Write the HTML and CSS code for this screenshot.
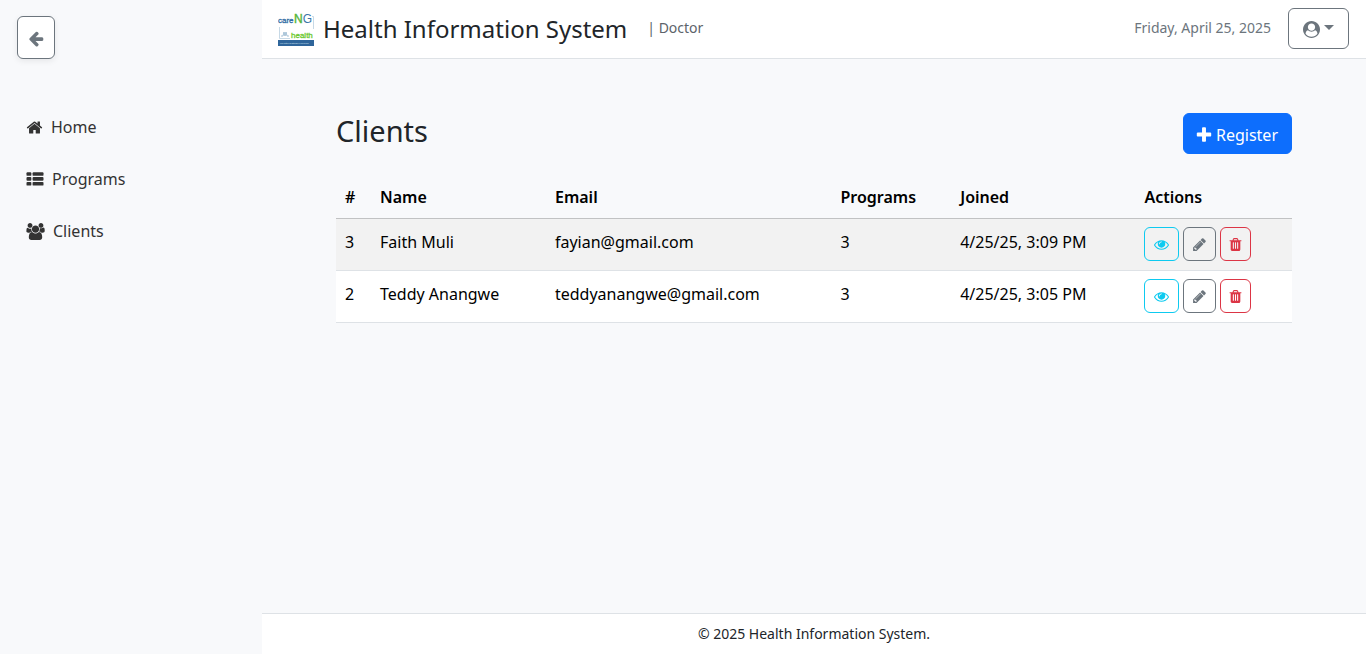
FILE: index.html
```html
<!DOCTYPE html>
<html lang="en">
<head>
<meta charset="utf-8">
<title>Health Information System</title>
<link rel="stylesheet" href="styles.css">
</head>
<body>
<svg class="defs" aria-hidden="true">
  <symbol id="eye" viewBox="0 0 1792 1792"><path d="M1664 960q-152-236-381-353 61 104 61 225 0 185-131.5 316.5t-316.5 131.5-316.5-131.5-131.5-316.5q0-121 61-225-229 117-381 353 133 205 333.5 326.5t434.5 121.5 434.5-121.5 333.5-326.5zm-720-384q0-20-14-34t-34-14q-125 0-214.5 89.5t-89.5 214.5q0 20 14 34t34 14 34-14 14-34q0-86 61-147t147-61q20 0 34-14t14-34zm848 384q0 34-20 69-140 230-376.5 368.5t-499.5 138.5-499.5-139-376.5-368q-20-35-20-69t20-69q140-229 376.5-368t499.5-139 499.5 139 376.5 368q20 35 20 69z"/></symbol>
  <symbol id="pencil" viewBox="128 0 1536 1792"><path d="M491 1536l91-91-235-235-91 91v107h128v128h107zm523-928q0-22-22-22-10 0-17 7l-542 542q-7 7-7 17 0 22 22 22 10 0 17-7l542-542q7-7 7-17zm-54-192l416 416-832 832h-416v-416zm683 96q0 53-37 90l-166 166-416-416 166-165q36-38 90-38 53 0 91 38l235 234q37 39 37 91z"/></symbol>
  <symbol id="trash" viewBox="192 0 1408 1792"><path d="M704 1376v-704q0-14-9-23t-23-9h-64q-14 0-23 9t-9 23v704q0 14 9 23t23 9h64q14 0 23-9t9-23zm256 0v-704q0-14-9-23t-23-9h-64q-14 0-23 9t-9 23v704q0 14 9 23t23 9h64q14 0 23-9t9-23zm256 0v-704q0-14-9-23t-23-9h-64q-14 0-23 9t-9 23v704q0 14 9 23t23 9h64q14 0 23-9t9-23zm-544-992h448l-48-117q-7-9-17-11h-317q-10 2-17 11zm928 32v64q0 14-9 23t-23 9h-96v948q0 83-47 143.5t-113 60.5h-832q-66 0-113-58.5t-47-141.5v-952h-96q-14 0-23-9t-9-23v-64q0-14 9-23t23-9h309l70-167q15-37 54-63t79-26h320q40 0 79 26t54 63l70 167h309q14 0 23 9t9 23z"/></symbol>
</svg>
<div class="app">
  <aside class="sidebar">
    <button class="btn toggle" type="button" aria-label="Collapse sidebar">
      <svg class="icon icon-md" viewBox="64 0 1664 1792"><path d="M1664 896v128q0 53-32.5 90.5t-84.5 37.5h-704l293 294q38 36 38 90t-38 90l-75 76q-37 37-90 37-52 0-91-37l-651-652q-37-37-37-90 0-52 37-91l651-650q38-38 91-38 52 0 90 38l75 74q38 38 38 91t-38 91l-293 293h704q52 0 84.5 37.5t32.5 90.5z"/></svg>
    </button>
    <nav class="nav" aria-label="Main">
      <a class="nav-link" href="#home">
        <svg class="icon icon-home" viewBox="64 0 1664 1792"><path d="M1472 992v480q0 26-19 45t-45 19h-384v-384h-256v384h-384q-26 0-45-19t-19-45v-480q0-1 .5-3t.5-3l575-474 575 474q1 2 1 6zm223-69l-62 74q-8 9-21 11h-3q-13 0-21-7l-692-577-692 577q-12 8-24 7-13-2-21-11l-62-74q-8-10-7-23.5t11-21.5l719-599q32-26 76-26t76 26l244 204v-195q0-14 9-23t23-9h192q14 0 23 9t9 23v408l219 182q10 8 11 21.5t-7 23.5z"/></svg>
        <span>Home</span>
      </a>
      <a class="nav-link" href="#programs">
        <svg class="icon icon-md" viewBox="0 0 1792 1792"><rect y="128" width="512" height="384" rx="96"/><rect x="640" y="128" width="1152" height="384" rx="96"/><rect y="640" width="512" height="384" rx="96"/><rect x="640" y="640" width="1152" height="384" rx="96"/><rect y="1152" width="512" height="384" rx="96"/><rect x="640" y="1152" width="1152" height="384" rx="96"/></svg>
        <span>Programs</span>
      </a>
      <a class="nav-link" href="#clients">
        <svg class="icon icon-users" viewBox="64 0 1920 1792"><path d="M657 896q-162 5-265 128h-134q-82 0-138-40.5t-56-118.5q0-353 124-353 6 0 43.5 21t97.5 42.5 119 21.5q67 0 133-23-5 37-5 66 0 159 93 293zm1071 637q0 120-73 189.5t-194 69.5h-874q-121 0-194-69.5t-73-189.5q0-53 3.5-103.5t14-109 26.5-108.5 43-97.5 62-81 85.5-53.5 111.5-20q10 0 43 21.5t73 48 107 48 135 21.5 135-21.5 107-48 73-48 43-21.5q61 0 111.5 20t85.5 53.5 62 81 43 97.5 26.5 108.5 14 109 3.5 103.5zm-1024-1277q0 106-75 181t-181 75-181-75-75-181 75-181 181-75 181 75 75 181zm704 384q0 159-112.5 271.5t-271.5 112.5-271.5-112.5-112.5-271.5 112.5-271.5 271.5-112.5 271.5 112.5 112.5 271.5zm576 225q0 78-56 118.5t-138 40.5h-134q-103-123-265-128 93-134 93-293 0-29-5-66 66 23 133 23 59 0 119-21.5t97.5-42.5 43.5-21q124 0 124 353zm-128-609q0 106-75 181t-181 75-181-75-75-181 75-181 181-75 181 75 75 181z"/></svg>
        <span>Clients</span>
      </a>
    </nav>
  </aside>
  <div class="page">
    <header class="topbar">
      <svg class="logo" viewBox="0 0 36 36" role="img" aria-label="careNG health">
        <path d="M34 6.500H35.500V19M1.500 17V28.500H12" fill="none" stroke="#b9cfe0" stroke-width=".8"/>
        <text x="0" y="13" font-size="8" fill="#2f6ca3" stroke="#2f6ca3" stroke-width=".3">care</text>
        <text x="16" y="13" font-size="12"><tspan fill="#56b53a" stroke="#56b53a" stroke-width=".4">N</tspan><tspan fill="#3a75a8">G</tspan></text>
        <path d="M3 26h2l1-4 1 4 1-4 1 4h2" fill="none" stroke="#8fb2cd" stroke-width=".8"/>
        <text x="13" y="28" font-size="8" fill="#6cc930" stroke="#6cc930" stroke-width=".3">health</text>
        <rect y="30" width="36" height="6" fill="#2f659a"/>
        <text x="2" y="34" font-size="2" fill="#dce8f2">For better healthcare experience</text>
      </svg>
      <h1 class="brand">Health Information System</h1>
      <span class="role">| Doctor</span>
      <time class="date" datetime="2025-04-25">Friday, April 25, 2025</time>
      <button class="btn account" type="button" aria-label="Account menu" aria-haspopup="true">
        <svg class="icon icon-lg" viewBox="0 0 1792 1792"><path d="M1523 1339q-22-155-87.5-257.5t-184.5-118.5q-67 74-159.5 115.5t-195.5 41.5-195.5-41.5-159.5-115.5q-119 16-184.5 118.5t-87.5 257.5q106 150 271 237.5t356 87.5 356-87.5 271-237.5zm-243-699q0-159-112.5-271.5t-271.5-112.5-271.5 112.5-112.5 271.5 112.5 271.5 271.5 112.5 271.5-112.5 112.5-271.5zm512 256q0 182-71 347.5t-190.5 286-285.5 191.5-349 71q-182 0-348-71t-286-191-191-286-71-348 71-348 191-286 286-191 348-71 348 71 286 191 191 286 71 348z"/></svg>
        <svg class="caret" viewBox="0 0 10 5"><path d="M0 0h10L5 5z"/></svg>
      </button>
    </header>
    <main class="content">
      <div class="heading">
        <h2 class="title">Clients</h2>
        <button class="btn register" type="button">
          <svg class="icon icon-md" viewBox="192 0 1408 1664"><path d="M1600 736v192q0 40-28 68t-68 28h-416v416q0 40-28 68t-68 28h-192q-40 0-68-28t-28-68v-416h-416q-40 0-68-28t-28-68v-192q0-40 28-68t68-28h416v-416q0-40 28-68t68-28h192q40 0 68 28t28 68v416h416q40 0 68 28t28 68z"/></svg>
          <span>Register</span>
        </button>
      </div>
      <table class="clients">
        <colgroup><col class="c-id"><col class="c-name"><col class="c-email"><col class="c-programs"><col class="c-joined"><col class="c-actions"></colgroup>
        <thead>
          <tr><th scope="col">#</th><th scope="col">Name</th><th scope="col">Email</th><th scope="col">Programs</th><th scope="col">Joined</th><th scope="col">Actions</th></tr>
        </thead>
        <tbody>
          <tr>
            <td>3</td><td>Faith Muli</td><td>fayian@gmail.com</td><td>3</td><td>4/25/25, 3:09 PM</td>
            <td class="cell-actions"><div class="actions">
              <button class="btn action view" type="button" aria-label="View Faith Muli"><svg class="icon icon-sm"><use href="#eye"/></svg></button>
              <button class="btn action edit" type="button" aria-label="Edit Faith Muli"><svg class="icon icon-sm"><use href="#pencil"/></svg></button>
              <button class="btn action delete" type="button" aria-label="Delete Faith Muli"><svg class="icon icon-sm"><use href="#trash"/></svg></button>
            </div></td>
          </tr>
          <tr>
            <td>2</td><td>Teddy Anangwe</td><td>teddyanangwe@gmail.com</td><td>3</td><td>4/25/25, 3:05 PM</td>
            <td class="cell-actions"><div class="actions">
              <button class="btn action view" type="button" aria-label="View Teddy Anangwe"><svg class="icon icon-sm"><use href="#eye"/></svg></button>
              <button class="btn action edit" type="button" aria-label="Edit Teddy Anangwe"><svg class="icon icon-sm"><use href="#pencil"/></svg></button>
              <button class="btn action delete" type="button" aria-label="Delete Teddy Anangwe"><svg class="icon icon-sm"><use href="#trash"/></svg></button>
            </div></td>
          </tr>
        </tbody>
      </table>
    </main>
    <footer class="footer">© 2025 Health Information System.</footer>
  </div>
</div>
</body>
</html>
```
FILE: styles.css
```css
*, *::before, *::after { box-sizing: border-box; }

body {
  margin: 0;
  background: #f8f9fb;
  color: #212529;
  font-family: "Noto Sans", "Open Sans", sans-serif;
  font-size: 16px;
  line-height: 24px;
}

.defs { display: none; }
.app { display: flex; min-height: 100vh; }
.page { flex: 1; min-width: 0; display: flex; flex-direction: column; }

.icon { display: block; flex: none; fill: currentColor; }
.icon-sm { width: 15px; height: 15px; }
.icon-md { width: 18px; height: 17px; }
.icon-lg { width: 17px; height: 17px; }
.icon-home { width: 17px; height: 17px; }
.icon-users { width: 19px; height: 17px; }

.btn {
  display: flex;
  align-items: center;
  justify-content: center;
  padding: 0;
  border: 1px solid currentColor;
  border-radius: 6px;
  background: transparent;
  color: #6c757d;
  font: inherit;
  cursor: pointer;
}

/* Sidebar */
.sidebar { flex: none; width: 262px; padding: 16px 17px; }
.toggle {
  width: 38px;
  height: 43px;
  padding-top: 2px;
  background: #fff;
  box-shadow: 0 2px 6px rgba(0, 0, 0, .08);
}
.nav { display: flex; flex-direction: column; gap: 28px; margin-top: 56px; padding-left: 9px; }
.nav-link { display: flex; align-items: center; gap: 8px; color: #333; text-decoration: none; }

/* Top bar */
.topbar {
  display: flex;
  align-items: center;
  min-height: 59px;
  padding: 0 17px 2px 16px;
  border-bottom: 1px solid #dee2e6;
  background: #fff;
}
.logo { flex: none; width: 36px; height: 36px; font-family: "Liberation Sans Narrow", "Liberation Sans", sans-serif; }
.brand { margin: 0 20px 0 9px; padding-top: 2px; font-size: 24px; font-weight: 400; line-height: 32px; }
.role { color: #5c636a; font-size: 14px; }
.date { margin-left: auto; color: #6c757d; font-size: 14px; }
.account { gap: 4px; width: 61px; height: 41px; margin-left: 17px; padding-top: 2px; }
.caret { width: 10px; height: 5px; margin-bottom: 3px; fill: currentColor; }

/* Clients */
.content { flex: 1; width: 100%; max-width: 1004px; margin: 0 auto; padding: 54px 24px 24px; }
.heading { display: flex; align-items: flex-start; justify-content: space-between; margin-bottom: 22px; }
.title { margin: 0; font-size: 29px; font-weight: 400; line-height: 36px; }
.register {
  gap: 3px;
  height: 41px;
  padding: 2px 13px 0 11px;
  border-color: #0d6efd;
  background: #0d6efd;
  color: #fff;
}

.clients { width: 100%; table-layout: fixed; border-collapse: collapse; color: #000; }
.c-id { width: 35px; }
.c-name { width: 19%; }
.c-email { width: 31%; }
.c-programs { width: 13%; }
.c-joined { width: 20%; }
.c-actions { width: 17%; }
.clients th, .clients td { padding: 11px 9px; text-align: left; vertical-align: top; }
.clients th { padding: 9px; font-weight: 600; border-bottom: 1px solid #c1c2c3; }
.clients td { border-bottom: 1px solid #dee2e6; background: #fff; }
.clients tbody tr:nth-child(odd) td { background: #f2f2f2; }
.clients .cell-actions { padding-top: 8px; padding-bottom: 9px; }

.actions { display: flex; gap: 4px; }
.action { height: 34px; padding-top: 1px; }
.view { width: 35px; color: #0dcaf0; }
.edit { width: 33px; }
.delete { width: 31px; color: #dc3545; }

.footer {
  padding: 8px 16px;
  border-top: 1px solid #dee2e6;
  background: #fff;
  font-size: 14px;
  text-align: center;
}
```
